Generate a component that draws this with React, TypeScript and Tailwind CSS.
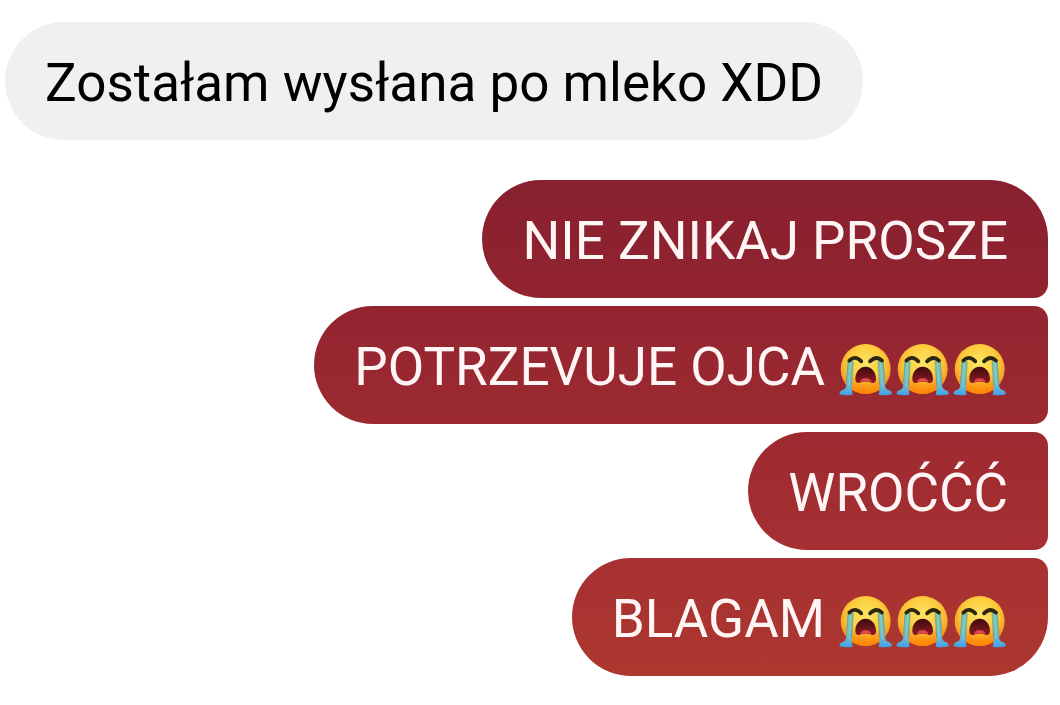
import React from "react";
import clsx from "clsx";

type Message = {
  id: number;
  text: string;
  sobs?: number; // crying faces after the text
  className: string;
};

const sentMessages: Message[] = [
  {
    id: 1,
    text: "NIE ZNIKAJ PROSZE",
    className: "rounded-tr-[59px] from-[#88202f] to-[#92242f]",
  },
  {
    id: 2,
    text: "POTRZEVUJE OJCA",
    sobs: 3,
    className: "from-[#932430] to-[#9c2a30]",
  },
  {
    id: 3,
    text: "WROĆĆĆ",
    className: "from-[#9d2a31] to-[#a63032]",
  },
  {
    id: 4,
    text: "BLAGAM",
    sobs: 3,
    className: "rounded-br-[59px] from-[#a73032] to-[#ac382f]",
  },
];

const SobDefs: React.FC = () => (
  <svg className="absolute h-0 w-0" aria-hidden="true">
    <defs>
      <radialGradient id="sob-face" cx="0.5" cy="0.38" r="0.64">
        <stop offset="0" stopColor="#fde566" />
        <stop offset="0.55" stopColor="#fccb3c" />
        <stop offset="1" stopColor="#f28a1c" />
      </radialGradient>
      <linearGradient id="sob-chin" x1="0" y1="0" x2="0" y2="1">
        <stop offset="0.6" stopColor="#ff9a1a" stopOpacity="0" />
        <stop offset="0.95" stopColor="#ff8500" stopOpacity="0.8" />
      </linearGradient>
      <linearGradient id="sob-mouth" x1="0" y1="0" x2="0" y2="1">
        <stop offset="0" stopColor="#3d0b0d" />
        <stop offset="1" stopColor="#8d1a26" />
      </linearGradient>
      <linearGradient id="sob-tear" x1="0" y1="0" x2="0" y2="1">
        <stop offset="0" stopColor="#7fbfa0" />
        <stop offset="0.5" stopColor="#72bdb8" />
        <stop offset="0.85" stopColor="#58b0dc" />
        <stop offset="1" stopColor="#3f9fe6" />
      </linearGradient>
    </defs>
  </svg>
);

const Sob: React.FC = () => (
  <svg
    viewBox="21 21 171 162"
    className="h-[54px] w-[57px]"
    role="img"
    aria-label="😭"
  >
    <circle cx="107" cy="102" r="75" fill="url(#sob-face)" />
    <circle cx="107" cy="102" r="75" fill="url(#sob-chin)" />

    {/* tears */}
    <path
      d="M53 76 Q62 81 70 76 L65 156 Q66 172 68 179 Q47 183 29 178 Q27 169 38 165 Q47 163 49 150 Z"
      fill="url(#sob-tear)"
    />
    <path
      d="M161 76 Q152 81 144 76 L149 156 Q148 172 146 179 Q167 183 185 178 Q187 169 176 165 Q167 163 165 150 Z"
      fill="url(#sob-tear)"
    />
    <path
      d="M62 82 L57 158 M152 82 L157 158"
      fill="none"
      stroke="#a5dce2"
      strokeWidth="3"
      opacity="0.6"
    />
    <path
      d="M54 80 L49 145 M70 80 L65 150 M160 80 L165 145 M144 80 L149 150"
      fill="none"
      stroke="#3e8c91"
      strokeWidth="2"
      opacity="0.65"
    />

    {/* closed eyes */}
    <path
      d="M58 77 Q75 60 94 79 M156 77 Q139 60 120 79"
      fill="none"
      stroke="#2b260f"
      strokeWidth="11"
      strokeLinecap="round"
    />

    {/* mouth */}
    <path
      d="M107 95 C88 95 76 113 76 131 C76 146 86 145 94 142 Q107 137 120 142 C128 145 138 146 138 131 C138 113 126 95 107 95 Z"
      fill="url(#sob-mouth)"
    />
    <path
      d="M90 142 Q94 127 107 130 Q120 127 124 142 Q107 135 90 142 Z"
      fill="#e2464f"
    />
  </svg>
);

const SentBubble: React.FC<{ message: Message }> = ({ message }) => {
  const { text, sobs = 0, className } = message;

  return (
    <li
      className={clsx(
        "flex items-center rounded-l-[59px] rounded-r-[14px] bg-linear-to-b px-10 pt-[26px] pb-[22px] text-[#fff5f5]",
        className
      )}
    >
      <p className="leading-[70px]">{text}</p>
      {sobs > 0 && (
        <span className="flex pt-1 pl-3">
          {Array.from({ length: sobs }, (_, i) => (
            <Sob key={i} />
          ))}
        </span>
      )}
    </li>
  );
};

const App: React.FC = () => {
  return (
    <main className="min-h-screen bg-white px-3 pt-[22px] pb-7 font-[Roboto,sans-serif] text-[53px] whitespace-nowrap">
      <SobDefs />

      {/* RECEIVED */}
      <div className="-ml-[7px] flex">
        <p className="rounded-full bg-[#f0f0f0] px-10 pt-[26px] pb-[22px] leading-[70px] text-black">
          Zostałam wysłana po mleko XDD
        </p>
      </div>

      {/* SENT */}
      <ul className="mt-10 flex flex-col items-end gap-2">
        {sentMessages.map((message) => (
          <SentBubble key={message.id} message={message} />
        ))}
      </ul>
    </main>
  );
};

export default App;
